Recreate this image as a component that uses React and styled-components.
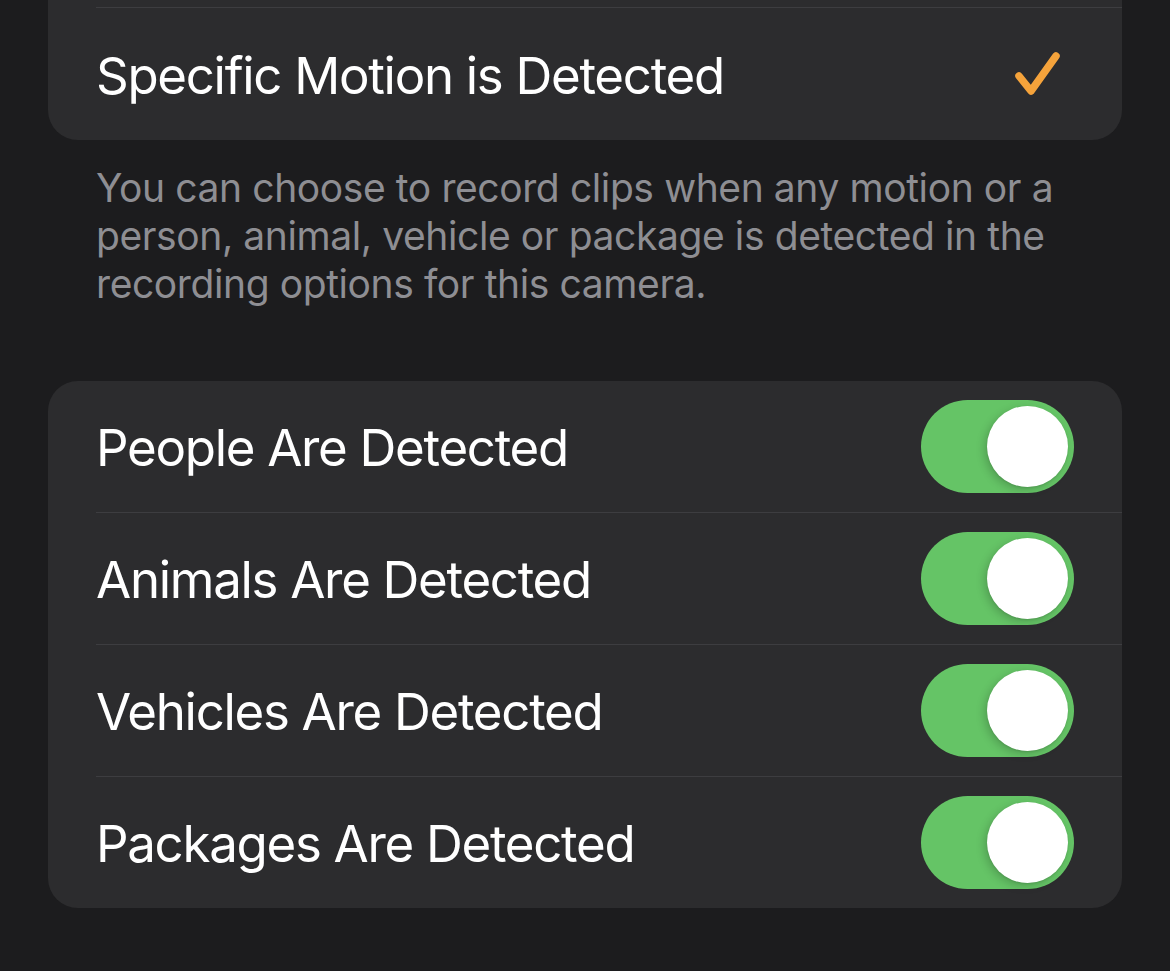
import React, { useState } from 'react';
import styled, { createGlobalStyle } from 'styled-components';

const GlobalStyle = createGlobalStyle`
  html, body {
    margin: 0;
    padding: 0;
    background: #1c1c1e;
  }
  body {
    font-family: Inter, "Liberation Sans", sans-serif;
    -webkit-font-smoothing: antialiased;
  }
`;

const Page = styled.div`
  width: 1170px;
  height: 971px;
  overflow: hidden;
  background: #1c1c1e;
  padding: 0 48px;
  box-sizing: border-box;
`;

const Card = styled.div`
  background: #2c2c2e;
  border-radius: ${props => (props.$cutTop ? '0 0 30px 30px' : '30px')};
  overflow: hidden;
  margin-top: ${props => props.$top || 0}px;
`;

const Row = styled.div`
  display: flex;
  align-items: center;
  justify-content: space-between;
  height: ${props => props.$height || 131}px;
  padding: 0 ${props => props.$padRight || 48}px 0 48px;
`;

const Divider = styled.div`
  height: 1px;
  margin-left: 48px;
  background: #3d3d40;
`;

const Label = styled.span`
  color: #ffffff;
  font-size: 51px;
  letter-spacing: -1.3px;
  line-height: 1;
  padding-top: 2px;
`;

const Footer = styled.p`
  margin: 0;
  padding: 24px 48px 0;
  color: #8e8e93;
  font-size: 39px;
  line-height: 48px;
  letter-spacing: -0.4px;
`;

const Track = styled.button`
  width: 153px;
  height: 93px;
  border: none;
  border-radius: 47px;
  padding: 6px;
  background: ${props => (props.$on ? '#65c466' : '#39393d')};
  display: flex;
  justify-content: ${props => (props.$on ? 'flex-end' : 'flex-start')};
  align-items: center;
  cursor: pointer;
  box-sizing: border-box;
`;

const Knob = styled.span`
  width: 81px;
  height: 81px;
  border-radius: 50%;
  background: #ffffff;
  box-shadow: -3px 3px 8px rgba(0, 0, 0, 0.18), 0 1px 2px rgba(0, 0, 0, 0.1);
`;

function Toggle({ on, onChange }) {
  return (
    <Track $on={on} onClick={onChange} aria-pressed={on}>
      <Knob />
    </Track>
  );
}

function Check() {
  return (
    <svg width="46" height="46" viewBox="0 0 46 46">
      <path
        d="M4 25 L16 40 L41 5"
        fill="none"
        stroke="#f5a33b"
        strokeWidth="7.5"
        strokeLinecap="round"
        strokeLinejoin="round"
      />
    </svg>
  );
}

const detections = [
  'People Are Detected',
  'Animals Are Detected',
  'Vehicles Are Detected',
  'Packages Are Detected',
];

export default function App() {
  const [enabled, setEnabled] = useState(detections.map(() => true));

  const flip = i => setEnabled(enabled.map((v, k) => (k === i ? !v : v)));

  return (
    <Page>
      <GlobalStyle />
      <Card $cutTop>
        <div style={{ height: 7 }} />
        <Divider />
        <Row $height={132} $padRight={61}>
          <Label>Specific Motion is Detected</Label>
          <Check />
        </Row>
      </Card>
      <Footer>
        You can choose to record clips when any motion or a person, animal, vehicle or package is
        detected in the recording options for this camera.
      </Footer>
      <Card $top={73}>
        {detections.map((name, i) => (
          <React.Fragment key={name}>
            {i > 0 && <Divider />}
            <Row>
              <Label>{name}</Label>
              <Toggle on={enabled[i]} onChange={() => flip(i)} />
            </Row>
          </React.Fragment>
        ))}
      </Card>
    </Page>
  );
}
